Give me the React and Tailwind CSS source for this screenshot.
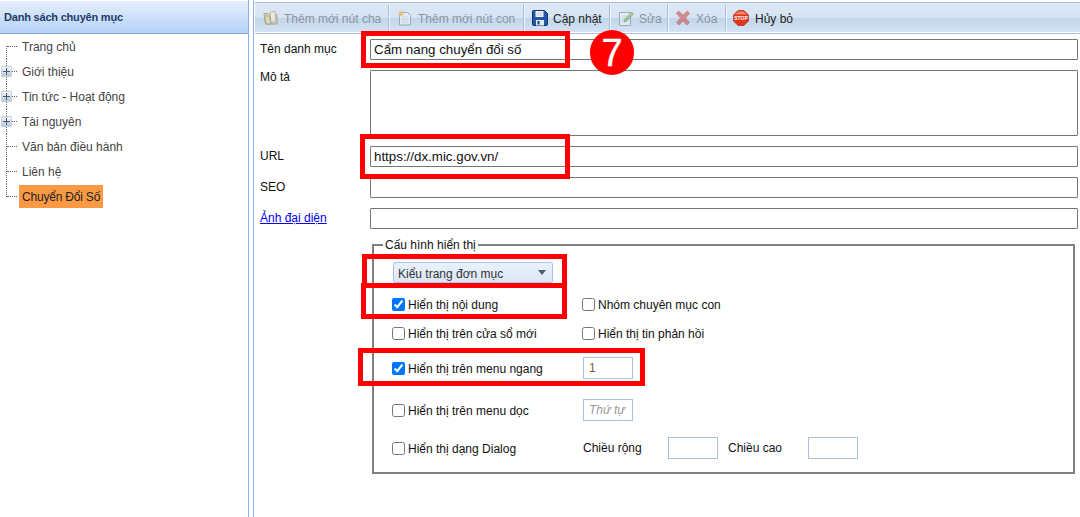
import React from 'react';

const font = { fontFamily: '"Liberation Sans", Arial, sans-serif' };

const treeItems = [
  { label: 'Trang chủ' },
  { label: 'Giới thiệu', plus: true },
  { label: 'Tin tức - Hoạt động', plus: true },
  { label: 'Tài nguyên', plus: true },
  { label: 'Văn bản điều hành' },
  { label: 'Liên hệ' },
  { label: 'Chuyển Đổi Số', active: true },
];

function PlusBox() {
  return (
    <span className="absolute left-[1px] top-[7px] flex h-[11px] w-[11px] items-center justify-center rounded-[1px] border border-[#c3cfdd] bg-gradient-to-b from-[#f6f8fb] to-[#b9c9dc]">
      <svg width="7" height="7" viewBox="0 0 7 7"><path d="M0 3.5h7M3.5 0v7" stroke="#4a5b72" strokeWidth="1" /></svg>
    </span>
  );
}

function TreeRow({ item, first, last }) {
  return (
    <div className="relative flex h-[25px] items-center pl-[19px]">
      <span className={`absolute left-[6px] w-0 border-l border-dotted border-[#666] ${first ? 'top-[12px] h-[13px]' : last ? 'top-0 h-[13px]' : 'top-0 h-[25px]'}`} />
      <span className="absolute left-[7px] top-[12px] w-[10px] border-t border-dotted border-[#666]" />
      {item.plus && <PlusBox />}
      {item.active ? (
        <span className="flex h-[23px] w-[84px] items-center whitespace-nowrap bg-[#fb9a44] px-[3px] text-[12px] tracking-[-0.2px] text-[#222]">{item.label}</span>
      ) : (
        <span className="px-[3px] text-[12px] text-[#444]">{item.label}</span>
      )}
    </div>
  );
}

function FolderIcon() {
  return (
    <svg width="16" height="16" viewBox="0 0 16 16" className="opacity-60">
      <path d="M1 3.500h4l1 1h8v9.500H2.500z" fill="#dcc57e" stroke="#8f8458" />
      <path d="M7 2.500l5-1.500 1 10-5 2z" fill="#f3eecf" stroke="#a49a70" />
      <path d="M1.500 6h5l1.500 8H3z" fill="#e9d591" stroke="#8f8458" />
    </svg>
  );
}

function NewPageIcon() {
  return (
    <svg width="16" height="16" viewBox="0 0 16 16" className="opacity-60">
      <path d="M2.500 2.500h8l3 3v9.500h-11z" fill="#eef1f6" stroke="#7d8796" />
      <path d="M5 7h6M5 9.500h6M5 12h6" stroke="#c2c9d4" />
      <circle cx="4" cy="3.500" r="2.500" fill="#f2a93b" />
    </svg>
  );
}

function SaveIcon() {
  return (
    <svg width="16" height="16" viewBox="0 0 16 16">
      <path d="M.5 1.500a1 1 0 0 1 1-1h11l3 3v11a1 1 0 0 1-1 1h-13a1 1 0 0 1-1-1z" fill="#2158a8" stroke="#123468" />
      <path d="M3.500 1h8v6h-8z" fill="#f4f6f9" />
      <path d="M4.500 3h6M4.500 5h6" stroke="#b9c4d4" />
      <path d="M4 10h8v5.500H4z" fill="#e3e7ee" />
      <path d="M5.500 11h2v3.500h-2z" fill="#1f3f75" />
    </svg>
  );
}

function EditIcon() {
  return (
    <svg width="16" height="16" viewBox="0 0 16 16" className="opacity-60">
      <path d="M1.500 2.500h11v13h-11z" fill="#eef1f6" stroke="#7f8a99" />
      <path d="M4 6h5M4 8.500h4M4 11h3" stroke="#b8c1cd" />
      <path d="M6 12l1-3 6.500-7 2 2L9 11z" fill="#8cbb62" stroke="#5b8a3d" strokeWidth=".8" />
    </svg>
  );
}

function DeleteIcon() {
  return (
    <svg width="16" height="16" viewBox="0 0 16 16" className="opacity-55">
      <path d="M1.500 3.500l2-2.500 4.500 4 4.500-4 2 2.500-4 4.500 4 4.500-2.500 2.500-4-4-4 4-2.500-2.500 4-4.500z" fill="#d4453a" stroke="#a3352c" strokeWidth=".7" />
    </svg>
  );
}

function StopIcon() {
  return (
    <svg width="16" height="16" viewBox="0 0 16 16">
      <path d="M5 .5h6L15.500 5v6L11 15.500H5L.5 11V5z" fill="#e0341b" stroke="#a92312" strokeWidth=".6" />
      <path d="M5.200 1.500h5.600L14 4.500H2z" fill="#f3826a" />
      <text x="8" y="9.800" textAnchor="middle" fontSize="5" fontWeight="700" fill="#fff" fontFamily="Liberation Sans, sans-serif">STOP</text>
    </svg>
  );
}

function ToolButton({ icon, label, disabled, className }) {
  return (
    <div className={`flex h-full items-center gap-[5px] border-r border-[#a5bedd] shadow-[1px_0_0_#eef4fb] ${className}`}>
      {icon}
      <span className={`relative top-[1px] whitespace-nowrap text-[12px] ${disabled ? 'text-[#8b94a3]' : 'text-[#222]'}`}>{label}</span>
    </div>
  );
}

function FieldRow({ label, link, labelClass = 'pt-[1px]', mb, children }) {
  return (
    <div className={`flex items-start ${mb}`}>
      <span className={`w-[110px] text-[12px] leading-[18px] ${labelClass} ${link ? 'text-[#0000ee] underline' : 'text-[#111]'}`}>{label}</span>
      {children}
    </div>
  );
}

function TextField({ value = '' }) {
  return (
    <input
      readOnly
      defaultValue={value}
      className="h-[21px] w-[708px] rounded-[1px] border border-[#767676] pl-[3px] text-[13.33px] text-[#111] outline-none"
    />
  );
}

function Check({ checked, label, className = '' }) {
  return (
    <label className={`flex items-center gap-[3px] ${className}`}>
      <input type="checkbox" readOnly defaultChecked={checked} className="m-0 h-[13px] w-[13px] accent-[#0075ff]" />
      <span className="relative top-[1px] whitespace-nowrap text-[12px] text-[#111]">{label}</span>
    </label>
  );
}

function SmallInput({ value = '', placeholder }) {
  return (
    <input
      readOnly
      defaultValue={value}
      placeholder={placeholder}
      className="h-[22px] w-[50px] border border-[#a9c0de] pl-[5px] text-[12px] text-[#7a5a2a] outline-none placeholder:italic placeholder:text-[#999]"
    />
  );
}

function RedBox({ className }) {
  return <div className={`pointer-events-none absolute border-[5px] border-[#ff0000] ${className}`} />;
}

export default function App() {
  return (
    <div className="relative flex h-[517px] w-[1080px] overflow-hidden bg-white" style={font}>
      <aside className="h-full w-[249px] shrink-0 border-r border-[#8fb0dc]">
        <div className="mt-[1px] flex h-[33px] items-center border-b border-[#86a9d9] bg-gradient-to-b from-[#e4effd] to-[#b6d2f7] pl-[4px] text-[11px] font-bold tracking-[-0.2px] text-[#1f3d66]">
          Danh sách chuyên mục
        </div>
        <div>
          {treeItems.map((item, i) => (
            <TreeRow key={item.label} item={item} first={i === 0} last={i === treeItems.length - 1} />
          ))}
        </div>
      </aside>

      <main className="ml-[4px] h-full min-w-0 flex-1 border-l border-[#8fb0dc]">
        <div className="mt-[2px] ml-[1px] flex h-[32px] items-center border-y border-[#a4c0e4] bg-[linear-gradient(#dfe9f6_0%,#d6e3f2_48%,#c2d6eb_52%,#d6e4f4_100%)] py-[2px] shadow-[inset_0_-1px_0_#fff]">
          <ToolButton icon={<FolderIcon />} label="Thêm mới nút cha" disabled className="w-[134px] pl-[8px]" />
          <ToolButton icon={<NewPageIcon />} label="Thêm mới nút con" disabled className="w-[135px] pl-[8px]" />
          <ToolButton icon={<SaveIcon />} label="Cập nhật" className="w-[86px] pl-[8px]" />
          <ToolButton icon={<EditIcon />} label="Sửa" disabled className="w-[58px] pl-[8px]" />
          <ToolButton icon={<DeleteIcon />} label="Xóa" disabled className="w-[58px] pl-[7px]" />
          <div className="flex items-center gap-[6px] pl-[7px]">
            <StopIcon />
            <span className="relative top-[1px] text-[12px] text-[#222]">Hủy bỏ</span>
          </div>
        </div>

        <div className="pl-[6px] pt-[5px]">
          <FieldRow label="Tên danh mục" mb="mb-[10px]">
            <TextField value="Cẩm nang chuyển đổi số" />
          </FieldRow>
          <FieldRow label="Mô tả" labelClass="-mt-[2px]" mb="mb-[10px]">
            <div className="h-[66px] w-[708px] rounded-[1px] border border-[#767676]" />
          </FieldRow>
          <FieldRow label="URL" mb="mb-[10px]">
            <TextField value="https://dx.mic.gov.vn/" />
          </FieldRow>
          <FieldRow label="SEO" mb="mb-[10px]">
            <TextField />
          </FieldRow>
          <FieldRow label="Ảnh đại diện" link mb="mb-[9px]">
            <TextField />
          </FieldRow>

          <fieldset className="ml-[112px] h-[236px] w-[703px] border-2 border-[#808080] pl-[18px]">
            <legend className="-ml-[9px] px-[2px] text-[12px] leading-[14px] text-[#111]">Cấu hình hiển thị</legend>

            <div className="ml-[1px] mt-[10px] flex h-[21px] w-[160px] items-center justify-between rounded-[2px] border border-[#a9c3e6] bg-gradient-to-b from-[#eaf1fb] to-[#dbe7f7] pl-[4px] pr-[6px] text-[12px] text-[#333]">
              <span className="relative top-[1px]">Kiểu trang đơn mục</span>
              <svg width="8" height="5" viewBox="0 0 8 5"><path d="M0 0h8L4 5z" fill="#4d5d73" /></svg>
            </div>

            <div className="mt-[11px] flex h-[20px] items-center">
              <Check checked label="Hiển thị nội dung" className="w-[190px]" />
              <Check label="Nhóm chuyên mục con" />
            </div>
            <div className="mt-[9px] flex h-[20px] items-center">
              <Check label="Hiển thị trên cửa sổ mới" className="w-[190px]" />
              <Check label="Hiển thị tin phản hồi" />
            </div>
            <div className="mt-[14px] flex h-[22px] items-center">
              <Check checked label="Hiển thị trên menu ngang" className="w-[191px]" />
              <SmallInput value="1" />
            </div>
            <div className="mt-[20px] flex h-[22px] items-center">
              <Check label="Hiển thị trên menu dọc" className="w-[191px]" />
              <SmallInput placeholder="Thứ tự" />
            </div>
            <div className="mt-[16px] flex h-[22px] items-center">
              <Check label="Hiển thị dạng Dialog" className="w-[191px]" />
              <span className="w-[85px] text-[12px] text-[#111]">Chiều rộng</span>
              <SmallInput />
              <span className="ml-[10px] w-[80px] text-[12px] text-[#111]">Chiều cao</span>
              <SmallInput />
            </div>
          </fieldset>
        </div>
      </main>

      <RedBox className="left-[361px] top-[31px] h-[37px] w-[209px]" />
      <RedBox className="left-[360px] top-[134px] h-[45px] w-[210px]" />
      <RedBox className="left-[362px] top-[254px] h-[34px] w-[205px]" />
      <RedBox className="left-[361px] top-[283px] h-[36px] w-[206px]" />
      <RedBox className="left-[358px] top-[348px] h-[38px] w-[287px]" />
      <div className="pointer-events-none absolute left-[590px] top-[30px] flex h-[45px] w-[44px] items-center justify-center rounded-full bg-[#ff0000] text-[38px] leading-none text-white [-webkit-text-stroke:0.4px_white]">
        7
      </div>
    </div>
  );
}
